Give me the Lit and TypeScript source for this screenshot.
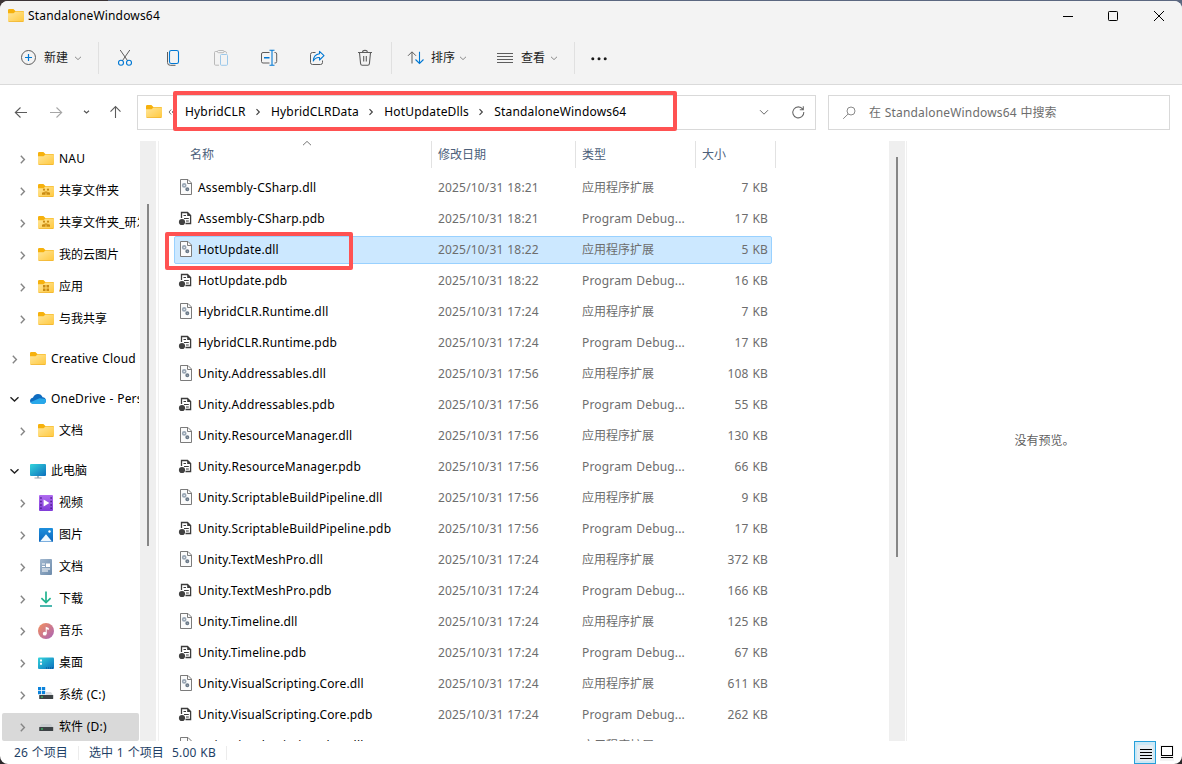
import { LitElement, html, css, svg, nothing } from "lit";
import { customElement } from "lit/decorators.js";
import { classMap } from "lit/directives/class-map.js";

/* Latin runs get slightly wider tracking than the ideographs around them. */
const t = (text: string) =>
  text
    .split(/([\u2e80-\u9fff\u3000-\u303f\uff00-\uffef]+)/)
    .filter((s) => s)
    .map((s) => (/[\u2e80-\u9fff]/.test(s) ? html`<span>${s}</span>` : html`<span class="latin">${s}</span>`));

const icon = (w: number, h: number, body: unknown) =>
  html`<svg width=${w} height=${h} viewBox="0 0 ${w} ${h}" fill="none">${body}</svg>`;

const gradients = svg`<defs>
  <linearGradient id="f" x1="0" y1="0" x2="1" y2="1"><stop offset="0" stop-color="#ffe69a"/><stop offset="1" stop-color="#ffc83d"/></linearGradient>
  <linearGradient id="pc" x1="0" y1="0" x2="1" y2="1"><stop offset="0" stop-color="#34d5dc"/><stop offset="1" stop-color="#0c6fbd"/></linearGradient>
  <linearGradient id="vd" x1="0" y1="0" x2="0" y2="1"><stop offset="0" stop-color="#b06cf0"/><stop offset="1" stop-color="#7f3bd8"/></linearGradient>
  <linearGradient id="im" x1="0" y1="0" x2="0" y2="1"><stop offset="0" stop-color="#1d8fdc"/><stop offset="1" stop-color="#0b66bd"/></linearGradient>
  <linearGradient id="dc" x1="0" y1="0" x2="1" y2="1"><stop offset="0" stop-color="#a3b9d0"/><stop offset="1" stop-color="#6d8bab"/></linearGradient>
  <linearGradient id="mu" x1="0" y1="0" x2="1" y2="1"><stop offset="0" stop-color="#f5915c"/><stop offset="1" stop-color="#a862b8"/></linearGradient>
</defs>`;

const folderBody = svg`${gradients}
  <path d="M0 2.2Q0 1 1.2 1H5.4L7.4 3H14.8Q16 3 16 4.2V8H0Z" fill="#f6b10d"/>
  <path d="M0 5.2H5.5L7.5 3.6H14.8Q16 3.6 16 4.8V12.6Q16 14 14.8 14H1.2Q0 14 0 12.6Z" fill="url(#f)"/>
  <path d="M.3 13.4Q.7 14 1.2 14H14.8Q15.4 14 15.7 13.4Z" fill="#e9a820"/>`;

const icons: Record<string, unknown> = {
  folder: folderBody,
  people: svg`${folderBody}<g fill="#c98a12"><circle cx="6" cy="6.7" r="1.1"/><circle cx="10" cy="6.7" r="1.1"/><path d="M6.6 8.2H9.4V10H6.6Z" opacity=".7"/><path d="M4 11.8V10.4Q4 9.2 5.2 9.2H6.4Q7.6 9.2 7.6 10.4V11.8ZM8.4 11.8V10.4Q8.4 9.2 9.6 9.2H10.8Q12 9.2 12 10.4V11.8Z"/></g>`,
  apps: svg`${folderBody}<path d="M5 6H7.5V8.5H5ZM8.5 6H11V8.5H8.5ZM5 9.4H7.5V12H5ZM8.5 9.4H11V12H8.5Z" fill="#c98a12"/>`,
  cloud: svg`<path d="M3 12.8C.9 12.5 0 11.2 0 9.8C0 8 1.3 6.9 2.9 6.7C3.8 4.4 5.6 3 8 3C10.1 3 11.9 4.2 12.6 6.3C14.7 6.4 16 7.9 16 9.7C16 11.5 14.7 12.9 12.8 12.9Z" fill="#0f6cc0"/><path d="M3.2 12.9Q1.2 12.8.3 11.2L9.5 7.2L15.6 8Q16 8.8 16 9.7C16 11.5 14.7 12.9 12.8 12.9Z" fill="#28a8ea"/>`,
  pc: svg`${gradients}<rect x="0" y="1" width="16" height="12" rx="1" fill="url(#pc)"/><path d="M7 13H9V15H7Z" fill="#a9b4bd"/><path d="M4.5 15H11.5" stroke="#98a4ae"/>`,
  video: svg`${gradients}<rect x="1" y="0" width="14" height="16" rx="1" fill="url(#vd)"/><path d="M2.2 2.2H3.7V3.7H2.2ZM2.2 5.7H3.7V7.2H2.2ZM2.2 9.2H3.7V10.7H2.2ZM2.2 12.5H3.7V14H2.2ZM12.4 2.2H13.9V3.7H12.4ZM12.4 5.7H13.9V7.2H12.4ZM12.4 9.2H13.9V10.7H12.4ZM12.4 12.5H13.9V14H12.4Z" fill="#4b1c88"/><path d="M5.6 4.5L11.4 8L5.6 11.5Z" fill="#fff"/>`,
  image: svg`${gradients}<rect x="1" y="1" width="14" height="14" rx="1" fill="url(#im)"/><circle cx="11.5" cy="4.5" r="1.2" fill="#fff"/><path d="M2 14.6L8 7.2L14 14.6Z" fill="#eef8ff"/>`,
  doc: svg`${gradients}<rect x="2" y="0" width="12" height="16" rx="1" fill="url(#dc)"/><path d="M4 5H7M4 7.5H7M4 10H12M4 12H10" stroke="#fff"/><rect x="8" y="4.5" width="4" height="3.5" fill="#fff"/>`,
  down: svg`<path d="M8 .5V11.3M3.4 7.1L8 11.5L12.6 7.1" stroke="#22b38f" stroke-width="1.7"/><path d="M2 15H14" stroke="#119f95" stroke-width="1.7"/>`,
  music: svg`${gradients}<circle cx="8" cy="8" r="8" fill="url(#mu)"/><circle cx="6.7" cy="10.7" r="1.9" fill="#fff"/><path d="M7.7 10.7V3.7L10.8 4.9V6.9L8.7 6.2V10.7Z" fill="#fff"/>`,
  desktop: svg`${gradients}<rect x="0" y="2.5" width="16" height="11.5" rx="1" fill="url(#pc)"/><path d="M2 4.5H4V6.5H2ZM2 7.8H4V9.8H2Z" fill="#fff"/><path d="M8 13H15" stroke="#0a4a8a" stroke-dasharray="1 1"/>`,
  winDrive: svg`<path d="M0 0H3.2V3.2H0ZM4 0H7.2V3.2H4ZM0 4H3.2V7.2H0ZM4 4H7.2V7.2H4Z" fill="#0b83dc"/><path d="M8 5H13L15 8.2H1.5V7.6H8Z" fill="#d9dcdf"/><rect x="1.2" y="8" width="14" height="4" rx=".6" fill="#3d4245"/><rect x="3" y="9.5" width="2" height="1" fill="#3fdf6c"/>`,
  drive: svg`<path d="M3.4 5H12.8L15 8.2H1.2Z" fill="#c9cccf"/><rect x="1.2" y="8" width="14" height="4" rx=".6" fill="#3d4245"/><rect x="3" y="9.5" width="2" height="1" fill="#3fdf6c"/>`,
};

const dllIcon = icon(16, 16, svg`<path d="M2.5.5H10L13.5 4V15.5H2.5Z" fill="#fbfbfb" stroke="#7b7b7b"/><path d="M9.5.5V4.5H13.5" stroke="#7b7b7b"/><circle cx="6.2" cy="6.4" r="1.5" stroke="#9aa7b5" stroke-width="1.7"/><circle cx="9.3" cy="10.2" r="1.2" stroke="#6c7b8a" stroke-width="1.6"/>`);
const pdbIcon = icon(16, 16, svg`<path d="M3.5 8V2.5H9.5L12.6 5.6V13.5H7.5" fill="#fff" stroke="#3c3c3c" stroke-width="1.3"/><path d="M9.2 2.2V6H13Z" fill="#3c3c3c"/><path d="M5.5 5.5H8M6 8.5H10.8M8 11H10.8" stroke="#3c3c3c"/><circle cx="4" cy="12" r="3.1" fill="#414141"/>`);

interface Nav { name: string; icon: string; root?: boolean; open?: boolean; gap?: boolean; selected?: boolean }
const nav: Nav[] = [
  { name: "NAU", icon: "folder" },
  { name: "共享文件夹", icon: "people" },
  { name: "共享文件夹_研发", icon: "people" },
  { name: "我的云图片", icon: "folder" },
  { name: "应用", icon: "apps" },
  { name: "与我共享", icon: "folder" },
  { name: "Creative Cloud", icon: "folder", root: true, gap: true },
  { name: "OneDrive - Pers", icon: "cloud", root: true, open: true, gap: true },
  { name: "文档", icon: "folder" },
  { name: "此电脑", icon: "pc", root: true, open: true, gap: true },
  { name: "视频", icon: "video" },
  { name: "图片", icon: "image" },
  { name: "文档", icon: "doc" },
  { name: "下载", icon: "down" },
  { name: "音乐", icon: "music" },
  { name: "桌面", icon: "desktop" },
  { name: "系统 (C:)", icon: "winDrive" },
  { name: "软件 (D:)", icon: "drive", selected: true },
];

const files: [string, string, string][] = [
  ["Assembly-CSharp.dll", "18:21", "7"],
  ["Assembly-CSharp.pdb", "18:21", "17"],
  ["HotUpdate.dll", "18:22", "5"],
  ["HotUpdate.pdb", "18:22", "16"],
  ["HybridCLR.Runtime.dll", "17:24", "7"],
  ["HybridCLR.Runtime.pdb", "17:24", "17"],
  ["Unity.Addressables.dll", "17:56", "108"],
  ["Unity.Addressables.pdb", "17:56", "55"],
  ["Unity.ResourceManager.dll", "17:56", "130"],
  ["Unity.ResourceManager.pdb", "17:56", "66"],
  ["Unity.ScriptableBuildPipeline.dll", "17:56", "9"],
  ["Unity.ScriptableBuildPipeline.pdb", "17:56", "17"],
  ["Unity.TextMeshPro.dll", "17:24", "372"],
  ["Unity.TextMeshPro.pdb", "17:24", "166"],
  ["Unity.Timeline.dll", "17:24", "125"],
  ["Unity.Timeline.pdb", "17:24", "67"],
  ["Unity.VisualScripting.Core.dll", "17:24", "611"],
  ["Unity.VisualScripting.Core.pdb", "17:24", "262"],
  ["Unity.VisualScripting.Flow.dll", "17:24", "283"],
];

const base = css`
  * { box-sizing: border-box; }
  svg { display: block; flex: none; }
  .latin { letter-spacing: 0.17px; word-spacing: 0.5px; }
  :host { display: block; box-sizing: border-box; font: 12px/16px "Noto Sans", "Noto Sans CJK SC", sans-serif; color: #000; white-space: nowrap; }
`;

@customElement("title-bar")
class TitleBar extends LitElement {
  static styles = [base, css`
    .bar { display: flex; align-items: center; height: 29px; padding-left: 8px; gap: 4px; }
    .name { flex: 1; }
    .controls { display: flex; }
    .control { width: 46px; display: flex; justify-content: center; }
  `];
  render() {
    return html`<div class="bar">
      ${icon(16, 16, folderBody)}<span class="name">${t("StandaloneWindows64")}</span>
      <div class="controls">
        <div class="control">${icon(12, 12, svg`<path d="M2 6.5H12" stroke="#000"/>`)}</div>
        <div class="control">${icon(12, 12, svg`<rect x="1.5" y="1.5" width="9" height="9" rx=".8" stroke="#000"/>`)}</div>
        <div class="control">${icon(12, 12, svg`<path d="M1 1L11 11M11 1L1 11" stroke="#000"/>`)}</div>
      </div></div>`;
  }
}

@customElement("command-bar")
class CommandBar extends LitElement {
  static styles = [base, css`
    .bar { display: flex; align-items: center; height: 54px; padding: 2px 0 0 16px; color: #1b1b1b; }
    .new, .sort, .view { display: flex; align-items: center; }
    .new { gap: 4px; width: 82px; }
    .new .label { padding-right: 1px; }
    .line { width: 1px; height: 32px; background: #e0e0e0; }
    .tools { display: flex; gap: 24px; padding: 0 14px; }
    .sort { padding-left: 12px; width: 101px; gap: 3px; }
    .view { gap: 4px; width: 81px; }
    .more { padding-left: 12px; }
  `];
  chev = icon(10, 10, svg`<path d="M2 3.8L5 6.6L8 3.8" stroke="#8a8a8a"/>`);
  render() {
    return html`<div class="bar">
      <div class="new">${icon(24, 24, svg`<circle cx="12.5" cy="11.5" r="7" stroke="#5d5d5d"/><path d="M12.5 8V15M9 11.5H16" stroke="#0078d4" stroke-width="1.2"/>`)}<span class="label">新建</span>${this.chev}</div>
      <div class="line"></div>
      <div class="tools">
        ${icon(24, 24, svg`<path d="M7.2 4L14.8 15M16.8 4L9.2 15" stroke="#5d5d5d"/><circle cx="8" cy="16.8" r="2.5" stroke="#0078d4" stroke-width="1.1"/><circle cx="16" cy="16.8" r="2.5" stroke="#0078d4" stroke-width="1.1"/>`)}
        ${icon(24, 24, svg`<path d="M6.5 6V16.5Q6.5 19.3 9.3 19.3H14.5" stroke="#5d5d5d"/><rect x="8.5" y="4.5" width="9" height="13" rx="1.8" stroke="#0078d4" stroke-width="1.1"/>`)}
        ${icon(24, 24, svg`<path d="M8.5 5.5H6.5Q5.5 5.5 5.5 6.5V18.2Q5.5 19.2 6.5 19.2H10M15 5.5H16.5Q17.5 5.5 17.5 7.5" stroke="#b9b9b9"/><rect x="8.5" y="4.5" width="6.5" height="2.2" rx="1" stroke="#b9b9b9"/><rect x="11.5" y="8.5" width="7" height="10.8" rx="1" stroke="#9cc8ea"/>`)}
        ${icon(24, 24, svg`<path d="M12.5 6.5H6Q4.5 6.5 4.5 8V15.5Q4.5 17 6 17H12.5M17.5 6.5H18.2Q19.7 6.5 19.7 8V15.5Q19.7 17 18.2 17H17.5" stroke="#5d5d5d"/><path d="M15 4V19.5M12.5 4.3H17.5M12.5 19.3H17.5" stroke="#0078d4" stroke-width="1.1"/><path d="M7 11.8H12.5" stroke="#0078d4" stroke-width="1.6"/>`)}
        ${icon(24, 24, svg`<path d="M10.5 6.5H7.5Q5.5 6.5 5.5 8.5V16.5Q5.5 18.5 7.5 18.5H15.5Q17.5 18.5 17.5 16.5V14.5" stroke="#5d5d5d"/><path d="M14.5 5.3L19 9.7L14.5 14V11.5Q10.5 11 8.3 15Q8.6 8.4 14.5 7.8Z" stroke="#0078d4" stroke-linejoin="round" stroke-width="1.1"/>`)}
        ${icon(24, 24, svg`<path d="M5 6.5H19M9.5 6.3Q9.7 4.4 12 4.4T14.5 6.3M6.5 6.8L7.6 17.8Q7.8 19.3 9.3 19.3H14.7Q16.2 19.3 16.4 17.8L17.5 6.8M10.7 10V15.5M13.3 10V15.5" stroke="#5d5d5d" stroke-width="1.1"/>`)}
      </div>
      <div class="line"></div>
      <div class="sort">${icon(24, 24, svg`<path d="M8 17.5V6M4 9.8L8 5.8L12 9.8" stroke="#5d5d5d"/><path d="M15.5 5.8V17M11.5 13.5L15.5 17.4L19.5 13.5" stroke="#0078d4" stroke-width="1.1"/>`)}<span>排序</span>${this.chev}</div>
      <div class="view">${icon(24, 24, svg`<path d="M4 7.5H20M4 10.5H20M4 13.5H20M4 16.5H20" stroke="#5d5d5d"/>`)}<span>查看</span>${this.chev}</div>
      <div class="line"></div>
      <div class="more">${icon(24, 24, svg`<g fill="#1b1b1b"><circle cx="5.8" cy="12.7" r="1.5"/><circle cx="12" cy="12.7" r="1.5"/><circle cx="18.2" cy="12.7" r="1.5"/></g>`)}</div>
    </div>`;
  }
}

@customElement("address-row")
class AddressRow extends LitElement {
  static styles = [base, css`
    .row { display: flex; height: 56px; padding: 10px 12px 11px 12px; }
    .nav { display: flex; align-items: center; width: 125px; flex: none; padding-bottom: 1px; }
    .slot { display: flex; justify-content: center; flex: none; }
    .back { width: 18px; } .fwd { width: 52px; } .recent { width: 9px; } .up { width: 48px; }
    .box { border: 1px solid #d9d9d9; display: flex; align-items: center; height: 35px; }
    .address { width: 679px; padding: 0 0 1px 8px; }
    .crumbs { flex: 1; display: flex; align-items: center; position: relative; }
    .over { padding: 0 9px 0 5px; }
    .crumb { padding-left: 1px; }
    .sep { width: 24.3px; display: flex; justify-content: center; }
    .mark { position: absolute; left: 27px; top: -13px; width: 504px; height: 40px; border: 4px solid #ff5252; border-radius: 2px; }
    .tail { display: flex; gap: 18px; padding-right: 9px; }
    .search { margin-left: 12px; flex: 1; padding-left: 12px; gap: 12px; color: #6d6d6d; }
  `];
  render() {
    const sep = html`<span class="sep">${icon(8, 10, svg`<path d="M2.5 2.2L5.3 5L2.5 7.8" stroke="#444" stroke-width="1.2"/>`)}</span>`;
    const parts = ["HybridCLR", "HybridCLRData", "HotUpdateDlls", "StandaloneWindows64"];
    return html`<div class="row">
      <div class="nav">
        <div class="slot back">${icon(16, 16, svg`<path d="M14 8.5H2.5M7.5 3.5L2.3 8.5L7.5 13.5" stroke="#5c5c5c" stroke-width="1.1"/>`)}</div>
        <div class="slot fwd">${icon(16, 16, svg`<path d="M2 8.5H13.5M8.5 3.5L13.7 8.5L8.5 13.5" stroke="#a6a6a6" stroke-width="1.1"/>`)}</div>
        <div class="slot recent">${icon(9, 10, svg`<path d="M2 3.7L4.5 6L7 3.7" stroke="#555" stroke-width="1.2"/>`)}</div>
        <div class="slot up">${icon(16, 16, svg`<path d="M8.5 14V2.5M3.5 7.6L8.5 2.5L13.5 7.6" stroke="#5c5c5c" stroke-width="1.1"/>`)}</div>
      </div>
      <div class="box address">
        <div class="crumbs">${icon(16, 16, folderBody)}
          <span class="over">${icon(8, 10, svg`<path d="M4.2 2.5L2 5L4.2 7.5M7.4 2.5L5.2 5L7.4 7.5" stroke="#777"/>`)}</span>
          ${parts.map((p, i) => html`${i ? sep : nothing}<span class="crumb">${t(p)}</span>`)}
          <div class="mark"></div>
        </div>
        <div class="tail">
          ${icon(16, 16, svg`<path d="M4 6.2L8 10.2L12 6.2" stroke="#6b6b6b"/>`)}
          ${icon(16, 16, svg`<path d="M12.8 5.2A5.5 5.5 0 1 0 13.8 8M13.3 2.2V5.7H9.8" stroke="#6b6b6b" stroke-width="1.1"/>`)}
        </div>
      </div>
      <div class="box search">${icon(16, 16, svg`<circle cx="10" cy="6" r="4" stroke="#8a8a8a"/><path d="M7.1 9L2.2 13.8" stroke="#8a8a8a"/>`)}<span>${t("在 StandaloneWindows64 中搜索")}</span></div>
    </div>`;
  }
}

@customElement("nav-tree")
class NavTree extends LitElement {
  static styles = [base, css`
    :host { width: 159px; height: 600px; overflow: hidden; display: flex; border-right: 1px solid #f0f0f0; }
    .tree { width: 140px; height: 600px; overflow: hidden; padding: 4px 1px 0 2px; }
    .item { height: 28px; margin: 0 0 4px; padding-left: 16px; display: flex; align-items: center; overflow: hidden; border-radius: 2px; }
    .item.root { padding-left: 8px; }
    .item.gap { margin-top: 12px; }
    .item.selected { background: #d9d9d9; }
    .label { padding-left: 5px; }
    .chev { width: 20px; flex: none; }
    .track { width: 16px; background: #efefef; padding: 63px 0 0 7px; }
    .thumb { width: 2px; height: 342px; background: #868686; }
  `];
  render() {
    return html`<div class="tree">${nav.map((n) => html`
      <div class=${classMap({ item: true, root: !!n.root, gap: !!n.gap, selected: !!n.selected })}>
        <span class="chev">${n.open
          ? icon(10, 12, svg`<path d="M.5 4.2L4.5 8L8.5 4.2" stroke="#222" stroke-width="1.4"/>`)
          : icon(10, 12, svg`<path d="M2.8 2.8L6.4 6.5L2.8 10.2" stroke="#858585" stroke-width="1.4"/>`)}</span>
        ${icon(16, 16, icons[n.icon])}<span class="label">${t(n.name)}</span>
      </div>`)}</div>
      <div class="track"><div class="thumb"></div></div>`;
  }
}

@customElement("file-list")
class FileList extends LitElement {
  static styles = [base, css`
    :host { width: 748px; height: 600px; overflow: hidden; display: flex; border-right: 1px solid #f0f0f0; }
    .content { width: 730px; padding-left: 15px; }
    .head, .row { display: grid; grid-template-columns: 258px 144px 120px 80px; width: 602px; }
    .head { height: 27px; margin-bottom: 6px; color: #4c607a; }
    .cell { border-right: 1px solid #e2e2e2; padding: 6px 0 0 6px; position: relative; }
    .cell.first { padding-left: 16px; }
    .up { position: absolute; left: 128px; top: -2px; }
    .row { height: 28px; margin-bottom: 3px; width: 598px; grid-template-columns: 257px 144px 120px 1fr; align-items: center; border: 1px solid transparent; border-radius: 2px; color: #6d6d6d; position: relative; }
    .row.selected { background: #cce8ff; border-color: #99d1ff; }
    .name { display: flex; align-items: center; gap: 4px; padding-left: 3px; color: #000; }
    .name svg { margin: -1px 0 1px; }
    .date, .type { padding-left: 6px; }
    .size { text-align: right; padding-right: 3px; }
    .mark { position: absolute; left: -10px; top: -5px; width: 188px; height: 38px; border: 4px solid #ff5252; border-radius: 2px; }
    .track { width: 16px; background: #efefef; padding: 16px 0 0 7px; }
    .thumb { width: 2px; height: 400px; background: #868686; }
  `];
  render() {
    return html`<div class="content">
      <div class="head"><div class="cell first">名称<span class="up">${icon(10, 8, svg`<path d="M1 6.2L5 2.4L9 6.2" stroke="#777"/>`)}</span></div><div class="cell">修改日期</div><div class="cell">类型</div><div class="cell">大小</div></div>
      ${files.map(([name, time, size], i) => {
        const dll = name.endsWith("dll");
        return html`<div class=${classMap({ row: true, selected: i === 2 })}>
          <span class="name">${dll ? dllIcon : pdbIcon}<span>${t(name)}</span></span>
          <span class="date">${t("2025/10/31 " + time)}</span>
          <span class="type">${t(dll ? "应用程序扩展" : "Program Debug...")}</span>
          <span class="size">${t(size + " KB")}</span>
          ${i === 2 ? html`<div class="mark"></div>` : nothing}
        </div>`;
      })}</div>
      <div class="track"><div class="thumb"></div></div>`;
  }
}

@customElement("status-bar")
class StatusBar extends LitElement {
  static styles = [base, css`
    .bar { display: flex; height: 23px; align-items: center; padding-left: 14px; color: #1e3f66; }
    .line { width: 1px; height: 14px; background: #ececec; }
    .count { width: 64px; } .sel { padding-left: 10px; width: 93px; } .bytes { width: 54px; }
    .modes { margin-left: auto; display: flex; height: 23px; align-items: center; padding-right: 8px; gap: 4px; }
    .mode { width: 22px; height: 23px; border: 1px solid #26a0da; background: #cbe8f6; display: flex; align-items: center; justify-content: center; }
  `];
  render() {
    return html`<div class="bar">
      <span class="count">${t("26 个项目")}</span><span class="line"></span>
      <span class="sel">${t("选中 1 个项目")}</span><span class="bytes">${t("5.00 KB")}</span><span class="line"></span>
      <div class="modes">
        <span class="mode">${icon(16, 16, svg`<rect width="16" height="16" rx="2" fill="#e6edf2"/><path d="M3 4.5H15M3 7.5H15M3 10.5H15M3 13.5H15" stroke="#000"/>`)}</span>
        ${icon(14, 16, svg`<rect width="14" height="16" fill="#f4f4f4"/><rect x="1.5" y="1.5" width="11" height="9" fill="#fff" stroke="#000"/><path d="M1 12.5H13" stroke="#000"/>`)}
      </div></div>`;
  }
}

@customElement("app-root")
class AppRoot extends LitElement {
  static styles = [base, css`
    :host { width: 1182px; height: 764px; overflow: hidden; padding-top: 1px; background: linear-gradient(90deg, #3b3436 108px, #5b6780 108px) top / 100% 20px no-repeat, #2b2729; }
    .window { height: 763px; border-radius: 8px; background: #fff; overflow: hidden; }
    .top { background: #f3f3f3; height: 84px; border-bottom: 1px solid #dadada; }
    .main { display: flex; height: 600px; }
    .preview { flex: 1; display: flex; align-items: center; justify-content: center; color: #5f5f5f; }
  `];
  render() {
    return html`<div class="window">
      <div class="top"><title-bar></title-bar><command-bar></command-bar></div>
      <address-row></address-row>
      <div class="main"><nav-tree></nav-tree><file-list></file-list><div class="preview">没有预览。</div></div>
      <status-bar></status-bar>
    </div>`;
  }
}
